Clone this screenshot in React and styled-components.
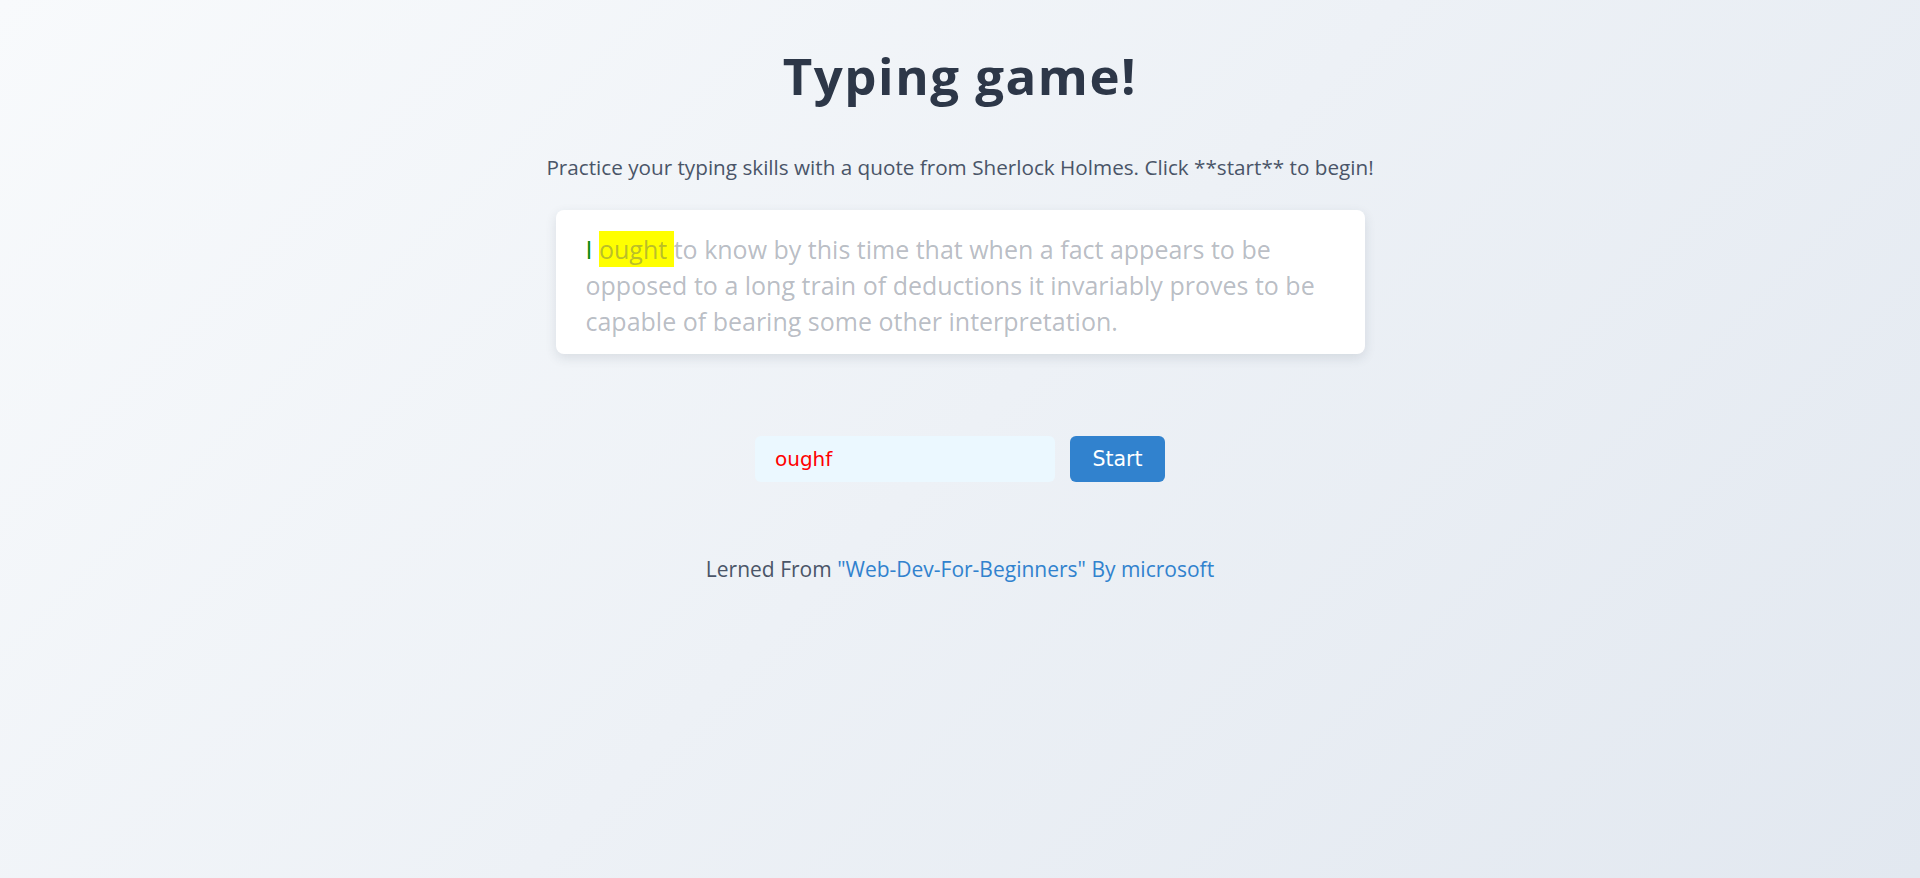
import React from "react";
import styled, { createGlobalStyle } from "styled-components";

const GlobalStyle = createGlobalStyle`
    html, body {
        margin: 0;
        padding: 0;
    }
    body {
        font-family: "Open Sans", Lato, sans-serif;
    }
`;

const Page = styled.div`
    min-height: 100vh;
    box-sizing: border-box;
    padding-top: 45px;
    background: linear-gradient(135deg, #f8fafc 0%, #e2e8f0 100%);
    display: flex;
    flex-direction: column;
    align-items: center;
    color: #4a5568;
`;

const Title = styled.h1`
    margin: 0;
    font-family: "Open Sans", sans-serif;
    font-size: 51px;
    font-weight: 700;
    line-height: 1.2;
    letter-spacing: 1.5px;
    color: #2d3748;
`;

const Intro = styled.p`
    margin: 46px 0 0;
    font-size: 20.7px;
    line-height: 30px;
    color: #4a5568;
`;

const QuoteBox = styled.p`
    margin: 28px 0 0;
    width: 809px;
    box-sizing: border-box;
    padding: 21px 30px 15px;
    background: #ffffff;
    border-radius: 8px;
    box-shadow: 0 4px 12px rgba(45, 55, 72, 0.12);
    font-size: 25px;
    line-height: 36px;
    color: rgba(74, 85, 104, 0.4);
`;

const Word = styled.span`
    color: ${(p) => (p.$done ? "#0a8a0a" : "inherit")};
    background: ${(p) => (p.$current ? "#ffff00" : "transparent")};
    display: ${(p) => (p.$current ? "inline-block" : "inline")};
    white-space: ${(p) => (p.$current ? "pre" : "normal")};
`;

const Controls = styled.div`
    margin-top: 82px;
    display: flex;
    gap: 15px;
`;

const Input = styled.input`
    width: 300px;
    height: 46px;
    box-sizing: border-box;
    padding: 0 20px;
    border: none;
    border-radius: 6px;
    background: #ebf8ff;
    font-family: "DejaVu Sans", Verdana, sans-serif;
    font-size: 20px;
    color: ${(p) => (p.$error ? "#ff0000" : "#2d3748")};
    outline: none;
`;

const StartButton = styled.button`
    width: 95px;
    height: 46px;
    border: none;
    border-radius: 6px;
    background: #3182ce;
    color: #ffffff;
    font-family: "DejaVu Sans", Verdana, sans-serif;
    font-size: 20.5px;
    cursor: pointer;
`;

const Footer = styled.p`
    margin: 72px 0 0;
    font-size: 21px;
    line-height: 30px;
    color: #4a5568;
`;

const Link = styled.a`
    color: #3182ce;
    text-decoration: none;
`;

const quote =
    "I ought to know by this time that when a fact appears to be opposed to a long train of deductions it invariably proves to be capable of bearing some other interpretation.";

export default function App() {
    const words = quote.split(" ");
    const current = 1;

    return (
        <Page>
            <GlobalStyle />
            <Title>Typing game!</Title>
            <Intro>
                Practice your typing skills with a quote from Sherlock Holmes. Click **start** to begin!
            </Intro>
            <QuoteBox>
                {words.map((w, i) => (
                    <Word key={i} $done={i < current} $current={i === current}>
                        {w + " "}
                    </Word>
                ))}
            </QuoteBox>
            <Controls>
                <Input $error defaultValue="oughf" />
                <StartButton>Start</StartButton>
            </Controls>
            <Footer>
                Lerned From{" "}
                <Link href="#">"Web-Dev-For-Beginners" By microsoft</Link>
            </Footer>
        </Page>
    );
}
